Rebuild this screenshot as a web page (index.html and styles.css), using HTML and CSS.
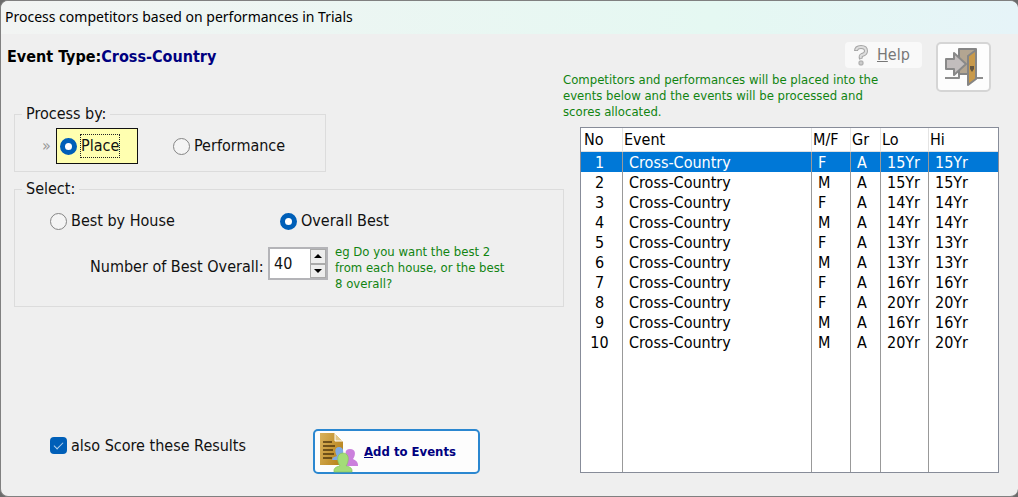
FILE: index.html
```html
<!DOCTYPE html>
<html lang="en">
<head>
<meta charset="utf-8">
<title>Process competitors based on performances in Trials</title>
<link rel="stylesheet" href="styles.css">
</head>
<body>
<div class="window">
  <header class="titlebar">Process competitors based on performances in Trials</header>
  <main class="content">
    <section class="left">
      <h1 class="event-type">Event Type:<span class="navy">Cross-Country</span></h1>
      <fieldset class="group process">
        <legend>Process by:</legend>
        <span class="marker">»</span>
        <label class="choice focused"><input type="radio" name="by" checked><span class="focus-text">Place</span></label>
        <label class="choice performance"><input type="radio" name="by"><span>Performance</span></label>
      </fieldset>
      <fieldset class="group select">
        <legend>Select:</legend>
        <div class="best-row">
          <label class="choice house"><input type="radio" name="best"><span>Best by House</span></label>
          <label class="choice"><input type="radio" name="best" checked><span>Overall Best</span></label>
        </div>
        <div class="number-row">
          <label class="number-label" for="count">Number of Best Overall:</label>
          <div class="spinner">
            <input id="count" type="text" value="40">
            <div class="arrows">
              <button type="button" aria-label="Increase"><svg width="8" height="4" viewBox="0 0 8 4"><path d="M0 4 4 0l4 4z"/></svg></button>
              <button type="button" aria-label="Decrease"><svg width="8" height="4" viewBox="0 0 8 4"><path d="M0 0 4 4l4-4z"/></svg></button>
            </div>
          </div>
          <p class="hint">eg Do you want the best 2 from each house, or the best 8 overall?</p>
        </div>
      </fieldset>
      <div class="actions">
        <label class="choice score"><input type="checkbox" checked><span>also Score these Results</span></label>
        <button type="button" class="add">
          <svg width="40" height="42" viewBox="0 0 40 42">
            <defs><linearGradient id="paper" x2="1" y2="0.5"><stop offset="0" stop-color="#d9b25c"/><stop offset="1" stop-color="#b9861f"/></linearGradient></defs>
            <path d="M2 2h15l8 8v24H2z" fill="url(#paper)"/>
            <path d="M17 2v8h8z" fill="#e2c88a" stroke="#fff" stroke-width="1"/>
            <path d="M5 11h9M5 15h12M5 19h10M5 23h11M5 27h9" stroke="#51380e" stroke-width="1.5"/>
            <path d="M14 29q0-3 5-4c-2-3-3-9 2-9s5 6 3 9q4 1 4 4z" fill="#7eaae4"/>
            <path d="M26 35q0-6 4-7c-3-4-4-10 2-10s6 6 3 10q5 2 5 6v1z" fill="#cb80dc"/>
            <path d="M16 41q-1-5 6-6c-3-4-4-13 3-13s6 9 3 13q7 1 6 6z" fill="#a3dc78" stroke="#86c35e" stroke-width=".7"/>
          </svg>
          <span><u>A</u>dd to Events</span>
        </button>
      </div>
    </section>
    <section class="right">
      <div class="top">
        <div class="top-text">
          <button type="button" class="help">
            <svg width="16" height="22" viewBox="0 0 16 22"><path d="M3 7q0-4 5-4 5 0 5 4 0 3-4 4-2 1-1 4" fill="none" stroke="#a5a5a5" stroke-width="4"/><path d="M3 6q1-3 5-3 5 0 5 4 0 3-4 4-2 1-1 3" fill="none" stroke="#ddd" stroke-width="2"/><rect x="6" y="17" width="4" height="4" rx="1" fill="#ccc" stroke="#a5a5a5"/></svg>
            <span><u>H</u>elp</span>
          </button>
          <p class="note">Competitors and performances will be placed into the events below and the events will be processed and scores allocated.</p>
        </div>
        <button type="button" class="exit" aria-label="Exit">
          <svg width="38" height="38" viewBox="0 0 38 38" stroke-linejoin="round">
            <path d="M0 30h14v-4M29 30h9" fill="none" stroke="#8d8d8d" stroke-width="2"/>
            <path d="M14 1h17v25H14z" fill="#b3a591" stroke="#858585" stroke-width="2"/>
            <path d="M23 8l8-6v29l-8 6z" fill="#c99a4b" stroke="#858585" stroke-width="2"/>
            <path d="M25 18h4v3l-2 3-2-3z" fill="#66563f"/>
            <path d="M1 11h8V5l12 11L9 27v-6H1z" fill="#c2bdbd" stroke="#898989" stroke-width="2"/>
          </svg>
        </button>
      </div>
      <div class="table-box">
        <table>
          <colgroup><col class="c-no"><col><col class="c-mf"><col class="c-gr"><col class="c-lo"><col class="c-hi"></colgroup>
          <thead><tr><th>No</th><th>Event</th><th>M/F</th><th>Gr</th><th>Lo</th><th>Hi</th></tr></thead>
          <tbody>
            <tr class="selected"><td>1</td><td>Cross-Country</td><td>F</td><td>A</td><td>15Yr</td><td>15Yr</td></tr>
            <tr><td>2</td><td>Cross-Country</td><td>M</td><td>A</td><td>15Yr</td><td>15Yr</td></tr>
            <tr><td>3</td><td>Cross-Country</td><td>F</td><td>A</td><td>14Yr</td><td>14Yr</td></tr>
            <tr><td>4</td><td>Cross-Country</td><td>M</td><td>A</td><td>14Yr</td><td>14Yr</td></tr>
            <tr><td>5</td><td>Cross-Country</td><td>F</td><td>A</td><td>13Yr</td><td>13Yr</td></tr>
            <tr><td>6</td><td>Cross-Country</td><td>M</td><td>A</td><td>13Yr</td><td>13Yr</td></tr>
            <tr><td>7</td><td>Cross-Country</td><td>F</td><td>A</td><td>16Yr</td><td>16Yr</td></tr>
            <tr><td>8</td><td>Cross-Country</td><td>F</td><td>A</td><td>20Yr</td><td>20Yr</td></tr>
            <tr><td>9</td><td>Cross-Country</td><td>M</td><td>A</td><td>16Yr</td><td>16Yr</td></tr>
            <tr><td>10</td><td>Cross-Country</td><td>M</td><td>A</td><td>20Yr</td><td>20Yr</td></tr>
            <tr class="filler"><td></td><td></td><td></td><td></td><td></td><td></td></tr>
          </tbody>
        </table>
      </div>
    </section>
  </main>
</div>
</body>
</html>
```
FILE: styles.css
```css
* { box-sizing: border-box; }
body {
  margin: 0;
  background: #6b6b6b;
  color: #111;
  font: 16px/20px "DejaVu Sans Condensed", "Noto Sans", sans-serif;
}
button, input { font: inherit; color: inherit; margin: 0; }
.window {
  display: flex;
  flex-direction: column;
  min-height: 100vh;
  border: 1px solid #808080;
  border-right: 0;
  border-radius: 8px;
  background: #efefef;
  overflow: hidden;
}
.titlebar {
  height: 33px;
  padding: 0 4px;
  font: 14px/32px "Noto Sans", sans-serif;
  color: #000;
  background: linear-gradient(90deg, #f2f4f3, #e5f8f2 70%, #e6f4f8);
}
.content { flex: 1; display: flex; }
.left { flex: 1; display: flex; flex-direction: column; padding: 13px 16px 22px 13px; }
.event-type { margin: 0 0 37px -7px; font-size: 16px; line-height: 20px; font-weight: bold; color: #000; }
.navy { color: #000080; }
.group { margin: 0; border: 1px solid #dcdcdc; padding: 0; min-width: 0; }
.group legend { margin-left: 7px; padding: 0 4px; }
.process { width: 312px; display: flex; align-items: center; height: 68px; padding-top: 4px; }
.marker { width: 14px; margin-left: 27px; color: #999; line-height: 32px; }
.choice { display: inline-flex; align-items: center; gap: 4px; }
.choice input {
  appearance: none;
  flex: none;
  width: 17px;
  height: 17px;
  border: 1px solid #858585;
  border-radius: 50%;
  background: #f4f4f4;
}
.choice input[type="radio"]:checked { border: 5px solid #005fb8; background: #fff; }
.choice input[type="checkbox"] {
  border: 0;
  border-radius: 4px;
  background: #005fb8;
  display: grid;
  place-items: center;
}
.choice input[type="checkbox"]::before {
  content: "";
  width: 8px;
  height: 4px;
  margin-bottom: 2px;
  border: solid #b5d3ee;
  border-width: 0 0 1px 1px;
  transform: rotate(-45deg);
}
.focused { width: 82px; height: 36px; padding-left: 3px; border: 1px solid #111; background: #ffffb0; }
.focus-text { outline: 1px dotted #222; line-height: 22px; }
.performance { margin-left: 35px; }
.select { margin-top: 7px; height: 128px; }
.best-row { display: flex; padding: 12px 0 0 35px; }
.house { width: 230px; }
.number-row { display: flex; align-items: flex-start; padding-top: 13px; }
.number-label { margin-left: 75px; padding-top: 13px; width: 178px; white-space: nowrap; }
.spinner { display: flex; width: 60px; height: 33px; margin-top: 3px; border: 2px solid #b4b4b8; background: #fff; }
.spinner input { flex: 1; min-width: 0; border: 0; padding: 0 4px; background: none; outline: none; }
.arrows { display: flex; flex-direction: column; width: 16px; background: #ededed; }
.arrows button { flex: 1; display: grid; place-items: center; padding: 0; border: 1px solid #aaa; background: #ededed; }
.hint, .note { margin: 0; color: #118411; font-size: 13px; line-height: 16px; }
.hint { margin-left: 7px; width: 180px; }
.actions { display: flex; align-items: center; margin-top: auto; padding-left: 36px; }
.score { width: 263px; padding-bottom: 12px; }
.add {
  display: flex;
  align-items: center;
  gap: 6px;
  width: 167px;
  height: 45px;
  padding: 0 0 0 3px;
  border: 2px solid #2b87d0;
  border-radius: 5px;
  background: #fdfdfd;
  color: #000080;
  font-size: 13px;
  font-weight: bold;
  white-space: nowrap;
}
.right { width: 438px; display: flex; flex-direction: column; padding-bottom: 23px; }
.top { display: flex; gap: 14px; padding-top: 8px; }
.top-text { width: 342px; display: flex; flex-direction: column; }
.help {
  align-self: flex-end;
  display: flex;
  align-items: center;
  gap: 8px;
  width: 77px;
  height: 26px;
  padding: 0 0 0 8px;
  border: 0;
  border-radius: 4px;
  background: #f9f9f9;
  color: #777;
  font-size: 16px;
}
.note { margin: 4px 0 7px -17px; width: 332px; }
.exit {
  width: 55px;
  height: 50px;
  display: grid;
  place-items: center;
  padding: 0;
  border: 2px solid #d5d5d5;
  border-radius: 5px;
  background: #fdfdfd;
}
.table-box { flex: 1; display: flex; margin-right: 19px; border: 1px solid #878c99; background: #fff; }
table { width: 100%; table-layout: fixed; border-collapse: separate; border-spacing: 0; color: #000; }
.c-no { width: 42px; }
.c-mf { width: 39px; }
.c-gr { width: 30px; }
.c-lo { width: 48px; }
.c-hi { width: 69px; }
th { height: 24px; padding: 1px 0 0 1px; border-right: 1px solid #e4e4e4; border-bottom: 1px solid #e0e0e0; text-align: left; font-weight: normal; line-height: 20px; }
th:first-child { padding-left: 3px; }
td { height: 20px; padding: 1px 0 0 6px; border-right: 1px solid #999; line-height: 19px; }
td:first-child { padding-left: 0; padding-right: 4px; text-align: center; }
th:last-child, td:last-child { border-right: 0; }
.selected td { background: #0078d7; color: #fff; }
.filler td { height: auto; }
```
